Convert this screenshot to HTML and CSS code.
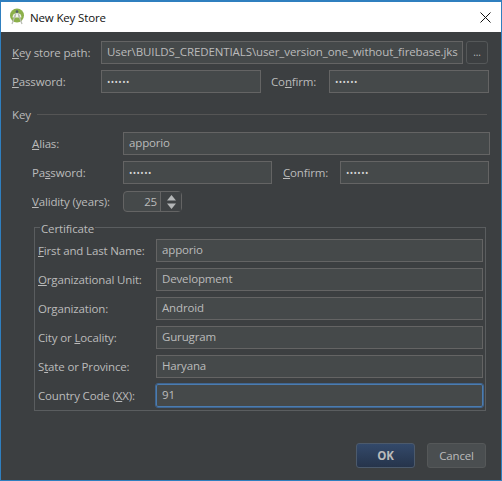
FILE: index.html
```html
<!DOCTYPE html>
<html>
<head>
    <title>New Key Store</title>
    <link rel="stylesheet" href="styles.css">
</head>
<body>
    <div class="janela">
        <div class="titulo">
            <svg class="logo" width="16" height="18" viewBox="0 0 16 18">
                <circle cx="8" cy="7.500" r="7" fill="#8cb04a"/>
                <path d="M3.500 9.500a4.500 4.500 0 0 1 9 0z" fill="#f2f5ea"/>
                <circle cx="6.200" cy="7.800" r=".6" fill="#6c8c3a"/>
                <circle cx="9.800" cy="7.800" r=".6" fill="#6c8c3a"/>
                <path d="M7 5 3 16M9 5l4 11" stroke="#b9bdb4" stroke-width="1.300" fill="none"/>
                <circle cx="8" cy="3.600" r="1.300" fill="#55606a"/>
            </svg>
            <span>New Key Store</span>
            <svg class="fechar" width="11" height="11" viewBox="0 0 11 11">
                <path d="M.5.5l10 10M10.500.5l-10 10" stroke="#111" stroke-width="1" fill="none"/>
            </svg>
        </div>

        <div class="conteudo">
            <div class="linha">
                <label class="rot-topo"><u>K</u>ey store path:</label>
                <div class="campo caminho">User\BUILDS_CREDENTIALS\user_version_one_without_firebase.jks</div>
                <div class="reticencias">...</div>
            </div>
            <div class="linha linha-senha">
                <label class="rot-topo"><u>P</u>assword:</label>
                <div class="campo senha-topo"><span class="pontos">••••••</span></div>
                <label class="rot-conf-topo">Co<u>n</u>firm:</label>
                <div class="campo senha-topo"><span class="pontos">••••••</span></div>
            </div>

            <div class="separador"><span>Key</span><i></i></div>

            <div class="chave">
                <div class="linha">
                    <label class="rot-chave"><u>A</u>lias:</label>
                    <div class="campo alias">apporio</div>
                </div>
                <div class="linha linha-senha2">
                    <label class="rot-chave">Pa<u>s</u>sword:</label>
                    <div class="campo senha-chave"><span class="pontos">••••••</span></div>
                    <label class="rot-conf-chave"><u>C</u>onfirm:</label>
                    <div class="campo senha-chave"><span class="pontos">••••••</span></div>
                </div>
                <div class="linha linha-validade">
                    <label class="rot-chave"><u>V</u>alidity (years):</label>
                    <div class="spinner">
                        <span class="valor">25</span>
                        <span class="setas">
                            <svg width="11" height="16" viewBox="0 0 11 16">
                                <path d="M5.500 1 10 6.500H1z" fill="#b4b6b7"/>
                                <path d="M1 9.500h9L5.500 15z" fill="#b4b6b7"/>
                            </svg>
                        </span>
                    </div>
                </div>

                <fieldset class="certificado">
                    <legend>Certificate</legend>
                    <div class="linha">
                        <label class="rot-cert"><u>F</u>irst and Last Name:</label>
                        <div class="campo">apporio</div>
                    </div>
                    <div class="linha">
                        <label class="rot-cert"><u>O</u>rganizational Unit:</label>
                        <div class="campo">Development</div>
                    </div>
                    <div class="linha">
                        <label class="rot-cert">Organization:</label>
                        <div class="campo">Android</div>
                    </div>
                    <div class="linha">
                        <label class="rot-cert">City or <u>L</u>ocality:</label>
                        <div class="campo">Gurugram</div>
                    </div>
                    <div class="linha">
                        <label class="rot-cert">S<u>t</u>ate or Province:</label>
                        <div class="campo">Haryana</div>
                    </div>
                    <div class="linha ultima">
                        <label class="rot-cert">Country Code (<u>X</u>X):</label>
                        <div class="campo ativo">91</div>
                    </div>
                </fieldset>
            </div>

            <div class="botoes">
                <div class="botao padrao">OK</div>
                <div class="botao">Cancel</div>
            </div>
        </div>
    </div>
    <div class="resto"></div>
</body>
</html>
```

FILE: styles.css
```css
html, body {
    margin: 0;
    padding: 0;
    height: 481px;
    overflow: hidden;
    background-color: #3c3f41;
}

body {
    color: #bbbbbb;
    font-family: "Open Sans", "Noto Sans", sans-serif;
    font-size: 11.5px;
    letter-spacing: -0.15px;
}

.janela {
    width: 500px;
    height: 478px;
    border: 1px solid #2f7fbf;
    border-top-width: 2px;
    display: flex;
    flex-direction: column;
    background-color: #3c3f41;
    box-sizing: content-box;
}

.titulo {
    height: 30px;
    flex: none;
    background-color: #fff;
    color: #111;
    display: flex;
    align-items: center;
    padding-left: 8px;
    padding-right: 10px;
    gap: 5px;
}

.fechar {
    margin-left: auto;
}

.conteudo {
    flex: 1;
    padding: 9px 11px 0 11px;
    display: flex;
    flex-direction: column;
}

.linha {
    display: flex;
    align-items: center;
    height: 23px;
    margin-bottom: 6px;
}

.campo {
    flex: 1;
    height: 23px;
    box-sizing: border-box;
    background-color: #45494a;
    border: 1px solid #646464;
    padding-left: 5px;
    line-height: 20px;
    white-space: nowrap;
    overflow: hidden;
}

.pontos {
    font-size: 9px;
    letter-spacing: 0.4px;
    color: #d8d8d8;
}

.rot-topo {
    width: 89px;
    flex: none;
}

.caminho {
    flex: none;
    width: 362px;
    letter-spacing: -0.1px;
}

.reticencias {
    width: 22px;
    height: 23px;
    margin-left: 3px;
    box-sizing: border-box;
    border: 1px solid #555859;
    border-radius: 3px;
    text-align: center;
    line-height: 20px;
    font-size: 10px;
}

.senha-topo {
    flex: none;
    width: 160px;
}

.rot-conf-topo {
    width: 68px;
    flex: none;
    padding-left: 10px;
    box-sizing: border-box;
}

.separador {
    display: flex;
    align-items: center;
    gap: 6px;
    margin-top: 7px;
    margin-right: 3px;
    height: 16px;
}

.separador i {
    flex: 1;
    height: 1px;
    background-color: #555555;
}

.chave {
    padding: 10px 0 0 20px;
}

.rot-chave {
    width: 91px;
    flex: none;
}

.alias {
    flex: none;
    width: 367px;
}

.senha-chave {
    flex: none;
    width: 149px;
}

.rot-conf-chave {
    width: 68px;
    flex: none;
    padding-left: 11px;
    box-sizing: border-box;
}

.linha-validade {
    margin-bottom: 4px;
}

.spinner {
    width: 59px;
    height: 21px;
    box-sizing: border-box;
    border: 1px solid #646464;
    border-radius: 4px;
    display: flex;
    background-color: #45494a;
}

.valor {
    flex: 1;
    text-align: right;
    padding-right: 3px;
    line-height: 19px;
}

.setas {
    width: 20px;
    border-left: 1px solid #646464;
    background-color: #3f4244;
    display: flex;
    align-items: center;
    justify-content: center;
}

.certificado {
    width: 452px;
    box-sizing: border-box;
    margin: 0 0 0 2px;
    padding: 2px 2px 0 3px;
    border: 1px solid #5a5d5f;
}

.certificado legend {
    padding: 4px 1px 0 1px;
    margin-left: 2px;
    line-height: 16px;
}

.rot-cert {
    width: 118px;
    flex: none;
}

.ultima {
    margin-bottom: 3px;
}

.ativo {
    border: 1px solid #4b7cb0;
    outline: 1px solid #3f6590;
    border-radius: 2px;
}

.botoes {
    display: flex;
    justify-content: flex-end;
    gap: 12px;
    margin-top: 32px;
    margin-right: 4px;
}

.botao {
    width: 59px;
    height: 25px;
    box-sizing: border-box;
    border: 1px solid #555859;
    border-radius: 3px;
    background-color: #4a4e50;
    text-align: center;
    line-height: 23px;
}

.padrao {
    background: linear-gradient(#33496a, #26344b);
    border-color: #4c5a6c;
    color: #bbbbbb;
    font-weight: 700;
}

.resto {
    height: 1px;
    background: repeating-linear-gradient(90deg, #222 0 5px, #8a8a80 5px 7px, #3c3f41 7px 12px, #c0c0b0 12px 13px);
}
```
